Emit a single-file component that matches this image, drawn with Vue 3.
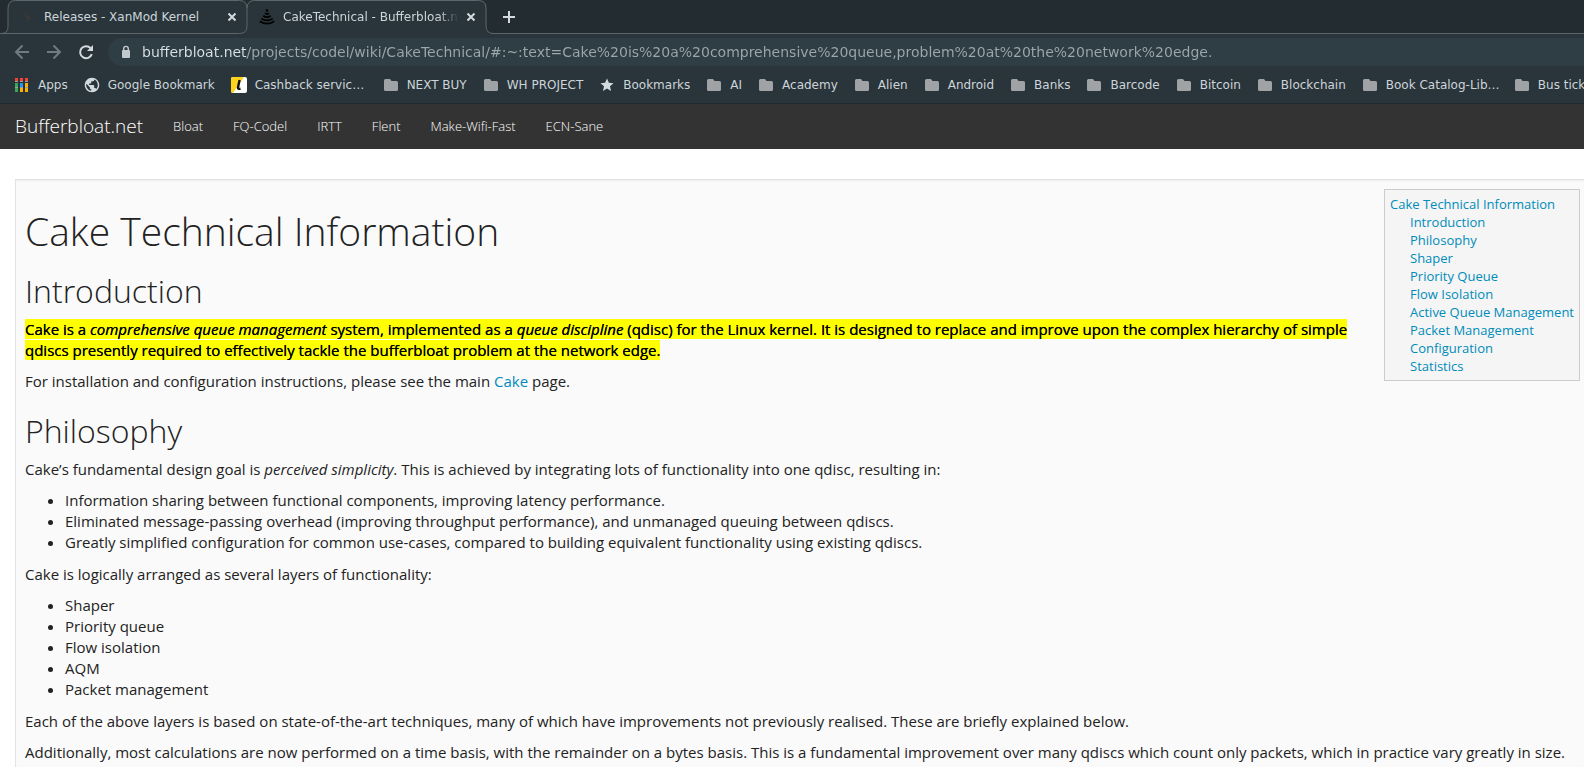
<script setup>
import { ref } from 'vue'

const url = ref('bufferbloat.net/projects/codel/wiki/CakeTechnical/#:~:text=Cake%20is%20a%20comprehensive%20queue,problem%20at%20the%20network%20edge.')

const bookmarks = [
  { icon: 'apps', label: 'Apps' },
  { icon: 'globe', label: 'Google Bookmark' },
  { icon: 'cashback', label: 'Cashback servic…', elided: true },
  { icon: 'folder', label: 'NEXT BUY' },
  { icon: 'folder', label: 'WH PROJECT' },
  { icon: 'star', label: 'Bookmarks' },
  { icon: 'folder', label: 'AI' },
  { icon: 'folder', label: 'Academy' },
  { icon: 'folder', label: 'Alien' },
  { icon: 'folder', label: 'Android' },
  { icon: 'folder', label: 'Banks' },
  { icon: 'folder', label: 'Barcode' },
  { icon: 'folder', label: 'Bitcoin' },
  { icon: 'folder', label: 'Blockchain' },
  { icon: 'folder', label: 'Book Catalog-Lib…', elided: true },
  { icon: 'folder', label: 'Bus tickets' }
]

const appColors = ['#f44336', '#f44336', '#f44336', '#34a853', '#2196f3', '#fbb004', '#34a853', '#fbb004', '#fbb004']

const siteLinks = ['Bloat', 'FQ-Codel', 'IRTT', 'Flent', 'Make-Wifi-Fast', 'ECN-Sane']

const sections = [
  'Introduction', 'Philosophy', 'Shaper', 'Priority Queue', 'Flow Isolation',
  'Active Queue Management', 'Packet Management', 'Configuration', 'Statistics'
]

const goals = [
  'Information sharing between functional components, improving latency performance.',
  'Eliminated message-passing overhead (improving throughput performance), and unmanaged queuing between qdiscs.',
  'Greatly simplified configuration for common use-cases, compared to building equivalent functionality using existing qdiscs.'
]

const layers = ['Shaper', 'Priority queue', 'Flow isolation', 'AQM', 'Packet management']

const anchor = (name) => '#' + name.toLowerCase().replace(/ /g, '-')
</script>

<template>
  <div class="window">
    <header class="browser">
      <div class="tab-strip">
        <svg class="tab-outline" width="496" height="34" viewBox="0 0 496 34" aria-hidden="true">
          <path class="tab-fill" d="M0 34C6 34 8 32 8 26V8Q8 0 16 0H239Q247 0 247 8Q247 0 255 0H479Q487 0 487 8V26Q487 34 495 34Z" />
          <path class="tab-line" d="M0 33.5C6 33.5 8.500 32 8.500 26V8.500Q8.500 .5 16 .5H240Q247.500 .5 247.500 8.500Q247.500 .5 255 .5H479Q486.500 .5 486.500 8.500V26Q486.500 33.500 494 33.500H496M240.500 8.500M247.500 8.500V26Q247.500 33.500 240 33.500H0" transform="translate(-.5 0)" />
        </svg>
        <div class="tab">
          <svg class="favicon" width="16" height="16" viewBox="0 0 16 16" aria-hidden="true">
            <path d="M3 2l5 5 1-2 1 4 2 1-3 1-3 4 1-5z" fill="#3a3739" />
          </svg>
          <span class="tab-title">Releases - XanMod Kernel</span>
          <button class="close" aria-label="Close Releases tab">
            <svg width="10" height="10" viewBox="0 0 10 10"><path d="M1.500 1.500l7 7m0-7l-7 7" /></svg>
          </button>
        </div>
        <div class="tab">
          <svg class="favicon" width="16" height="16" viewBox="0 0 16 16" aria-hidden="true">
            <circle cx="8" cy="1.500" r="1.300" fill="#000" />
            <path d="M6 4.200Q8 5.800 10 4.200M4.300 6.800Q8 9.600 11.700 6.800M2.300 9.600Q8 13.200 13.700 9.600M.8 12.300Q8 17 15.200 12.300" fill="none" stroke="#000" stroke-width="1.700" />
          </svg>
          <span class="tab-title fade">CakeTechnical - Bufferbloat.net</span>
          <button class="close" aria-label="Close CakeTechnical tab">
            <svg width="10" height="10" viewBox="0 0 10 10"><path d="M1.500 1.500l7 7m0-7l-7 7" /></svg>
          </button>
        </div>
        <button class="new-tab" aria-label="New tab">
          <svg width="12" height="12" viewBox="0 0 12 12"><path d="M6 0v12M0 6h12" /></svg>
        </button>
      </div>

      <div class="toolbar">
        <button class="nav-button dim" aria-label="Back">
          <svg width="16" height="16" viewBox="0 0 16 16"><path d="M15 8H2.500M8.500 1.500L2 8l6.500 6.500" /></svg>
        </button>
        <button class="nav-button dim" aria-label="Forward">
          <svg width="16" height="16" viewBox="0 0 16 16"><path d="M1 8h12.500M7.500 1.500L14 8l-6.500 6.500" /></svg>
        </button>
        <button class="nav-button" aria-label="Reload">
          <svg width="16" height="16" viewBox="0 0 16 16">
            <path d="M13.800 10.200A6 6 0 1 1 12.600 4.200" />
            <path class="solid" d="M15 1v6H9z" />
          </svg>
        </button>
        <div class="omnibox">
          <svg width="10" height="14" viewBox="0 0 10 14" aria-hidden="true">
            <path d="M2.700 6V3.700a2.300 2.300 0 0 1 4.600 0V6" fill="none" stroke="#c3cacd" stroke-width="1.400" />
            <rect x="1" y="5" width="8" height="8" rx="1" fill="#c3cacd" />
          </svg>
          <input v-model="url" type="text" aria-label="Address" spellcheck="false" />
        </div>
      </div>

      <nav class="bookmarks" aria-label="Bookmarks">
        <a v-for="item in bookmarks" :key="item.label" href="#">
          <svg width="16" height="16" viewBox="0 0 16 16" aria-hidden="true">
            <template v-if="item.icon === 'apps'">
              <rect v-for="(color, i) in appColors" :key="i" :x="1 + (i % 3) * 5" :y="1 + Math.floor(i / 3) * 5" width="3" :height="i < 3 ? 3 : 4" :fill="color" />
              <path d="M1 4.500h3m2 0h3m2 0h3M1 10.500h3m2 0h3m2 0h3" stroke="#98a0a3" />
            </template>
            <svg v-else-if="item.icon === 'globe'" x="0" y="0" width="16" height="16" viewBox="1 1 22 22">
              <path fill="#d3dbdf" d="M12 2C6.480 2 2 6.480 2 12s4.480 10 10 10 10-4.480 10-10S17.520 2 12 2zm-1 17.930c-3.950-.49-7-3.850-7-7.930 0-.62.080-1.210.210-1.790L9 15v1c0 1.100.9 2 2 2v1.930zm6.900-2.540c-.26-.81-1-1.390-1.900-1.390h-1v-3c0-.55-.45-1-1-1H8v-2h2c.55 0 1-.45 1-1V7h2c1.100 0 2-.9 2-2v-.41c2.930 1.190 5 4.060 5 7.410 0 2.080-.8 3.970-2.100 5.390z" />
            </svg>
            <template v-else-if="item.icon === 'cashback'">
              <rect width="16" height="16" rx="2" fill="#fff" />
              <path d="M2 0h11L2 16a2 2 0 0 1-2-2V2q0-2 2-2z" fill="#ffd21e" />
              <path d="M8.600 3L7 10.500q-.3 1.800 2.500 1.300" fill="none" stroke="#111" stroke-width="2.400" />
            </template>
            <path v-else-if="item.icon === 'star'" d="M8 1.500l1.900 4.300 4.600.4-3.500 3.100 1 4.600-4-2.400-4 2.400 1-4.600-3.500-3.100 4.600-.4z" fill="#d3dbdf" />
            <path v-else d="M2.500 2H7l1.500 2H13.500Q15 4 15 5.500V12.500Q15 14 13.500 14H2.500Q1 14 1 12.500V3.500Q1 2 2.500 2z" fill="#9fa3a6" />
          </svg>
          <span :class="{ elided: item.elided }">{{ item.label }}</span>
        </a>
      </nav>
    </header>

    <nav class="site-nav" aria-label="Site">
      <a class="brand" href="#">Bufferbloat.net</a>
      <a v-for="link in siteLinks" :key="link" href="#">{{ link }}</a>
    </nav>

    <main>
      <article>
        <nav class="contents" aria-label="Contents">
          <ul>
            <li>
              <a href="#cake-technical-information">Cake Technical Information</a>
              <ul>
                <li v-for="name in sections" :key="name"><a :href="anchor(name)">{{ name }}</a></li>
              </ul>
            </li>
          </ul>
        </nav>
        <h1>Cake Technical Information</h1>
        <h2>Introduction</h2>
        <p><mark>Cake is a <em>comprehensive queue management</em> system, implemented as a <em>queue discipline</em> (qdisc) for the Linux kernel. It is designed to replace and improve upon the complex hierarchy of simple qdiscs presently required to effectively tackle the bufferbloat problem at the network edge.</mark></p>
        <p>For installation and configuration instructions, please see the main <a href="#">Cake</a> page.</p>
        <h2>Philosophy</h2>
        <p>Cake’s fundamental design goal is <em>perceived simplicity</em>. This is achieved by integrating lots of functionality into one qdisc, resulting in:</p>
        <ul>
          <li v-for="goal in goals" :key="goal">{{ goal }}</li>
        </ul>
        <p>Cake is logically arranged as several layers of functionality:</p>
        <ul>
          <li v-for="layer in layers" :key="layer">{{ layer }}</li>
        </ul>
        <p>Each of the above layers is based on state-of-the-art techniques, many of which have improvements not previously realised. These are briefly explained below.</p>
        <p>Additionally, most calculations are now performed on a time basis, with the remainder on a bytes basis. This is a fundamental improvement over many qdiscs which count only packets, which in practice vary greatly in size.</p>
      </article>
    </main>
  </div>
</template>

<style>
html,
body,
#app {
  height: 100%;
}
body {
  margin: 0;
}
</style>

<style scoped>
.window {
  display: flex;
  flex-direction: column;
  height: 100%;
  overflow: hidden;
  background: #fff;
}

button {
  display: flex;
  align-items: center;
  justify-content: center;
  padding: 0;
  border: 0;
  background: none;
}
button path {
  fill: none;
  stroke: #d3dbdf;
  stroke-width: 2;
}

.browser {
  flex: none;
  font-family: "DejaVu Sans", sans-serif;
  font-size: 12px;
  color: #ccd5d9;
  background: #2a343b;
  border-bottom: 1px solid #1f292e;
}

.tab-strip {
  position: relative;
  display: flex;
  height: 34px;
  padding-left: 8px;
  box-sizing: border-box;
  background: linear-gradient(#5b676b, #5b676b) 487px 33px / 100% 1px no-repeat #222c31;
}
.tab-outline {
  position: absolute;
  left: 0;
  top: 0;
}
.tab-fill {
  fill: #2a343b;
}
.tab-line {
  fill: none;
  stroke: #5b676b;
}
.tab {
  position: relative;
  display: flex;
  align-items: center;
  width: 239px;
  padding: 0 7px 0 12px;
  box-sizing: border-box;
}
.favicon {
  flex: none;
  margin-right: 8px;
}
.tab-title {
  flex: 1;
  overflow: hidden;
  white-space: nowrap;
}
.fade {
  mask-image: linear-gradient(90deg, #000 88%, transparent 100%);
}
.close {
  width: 16px;
  height: 16px;
  margin-left: 4px;
}
.new-tab {
  width: 28px;
  margin-left: 9px;
}

.toolbar {
  display: flex;
  align-items: center;
  gap: 16px;
  height: 36px;
  padding-left: 14px;
}
.nav-button {
  width: 16px;
  height: 16px;
}
.nav-button.dim path {
  stroke: #6e7b80;
}
.nav-button .solid {
  fill: #d3dbdf;
  stroke: none;
}
.omnibox {
  display: flex;
  flex: 1;
  align-items: center;
  gap: 11px;
  height: 28px;
  margin-left: -2px;
  padding-left: 13px;
  border-radius: 14px 0 0 14px;
  background: #2f3d45;
}
.omnibox input {
  flex: 1;
  min-width: 0;
  padding: 0;
  border: 0;
  outline: 0;
  font: 14px/20px "DejaVu Sans", sans-serif;
  color: transparent;
  background: linear-gradient(90deg, #dbe3e6 105px, #9da8ac 105px);
  background-clip: text;
}

.bookmarks {
  display: flex;
  align-items: center;
  gap: 16px;
  height: 29px;
  padding: 0 0 4px 14px;
  overflow: hidden;
}
.bookmarks a {
  display: flex;
  flex: none;
  align-items: center;
  gap: 8px;
  height: 16px;
  color: inherit;
  text-decoration: none;
  white-space: nowrap;
}
.elided {
  width: 112px;
}

.site-nav {
  display: flex;
  flex: none;
  align-items: center;
  gap: 30px;
  height: 43px;
  padding: 0 0 2px 15px;
  font-family: "Open Sans", sans-serif;
  font-size: 13px;
  font-weight: 300;
  background: #333;
}
.site-nav a {
  color: #fff;
  text-decoration: none;
}
.site-nav .brand {
  font-size: 19px;
}

main {
  flex: 1;
  padding: 30px 0 0 15px;
  font: 15px/21px "Open Sans", sans-serif;
  color: #222;
}
article {
  display: flow-root;
  min-height: 100%;
  padding: 9px 4px 9px 9px;
  border: 1px solid #e3e3e3;
  border-right: 0;
  background: #fafafa;
  box-shadow: inset 0 1px 1px rgba(0, 0, 0, 0.05);
}
h1,
h2 {
  margin: 21px 0 11px;
  font-weight: 300;
}
h1 {
  margin-top: 20px;
  font-size: 39px;
  line-height: 43px;
}
h2 {
  font-size: 32px;
  line-height: 35px;
}
p {
  margin: 0 0 10px;
}
ul {
  margin: 0 0 11px;
  padding-left: 40px;
}
mark {
  color: #000;
  background: #ff0;
  text-shadow: 0 0 0 #000;
}
main a {
  color: #008cba;
  text-decoration: none;
}

.contents {
  float: right;
  margin: 0 0 10px 10px;
  padding: 5px;
  border: 1px solid #ccc;
  font-size: 13px;
  line-height: 18px;
  background: #f5f5f5;
}
.contents ul {
  margin: 0;
  padding: 0;
  list-style: none;
}
.contents ul ul {
  padding-left: 20px;
}
</style>
